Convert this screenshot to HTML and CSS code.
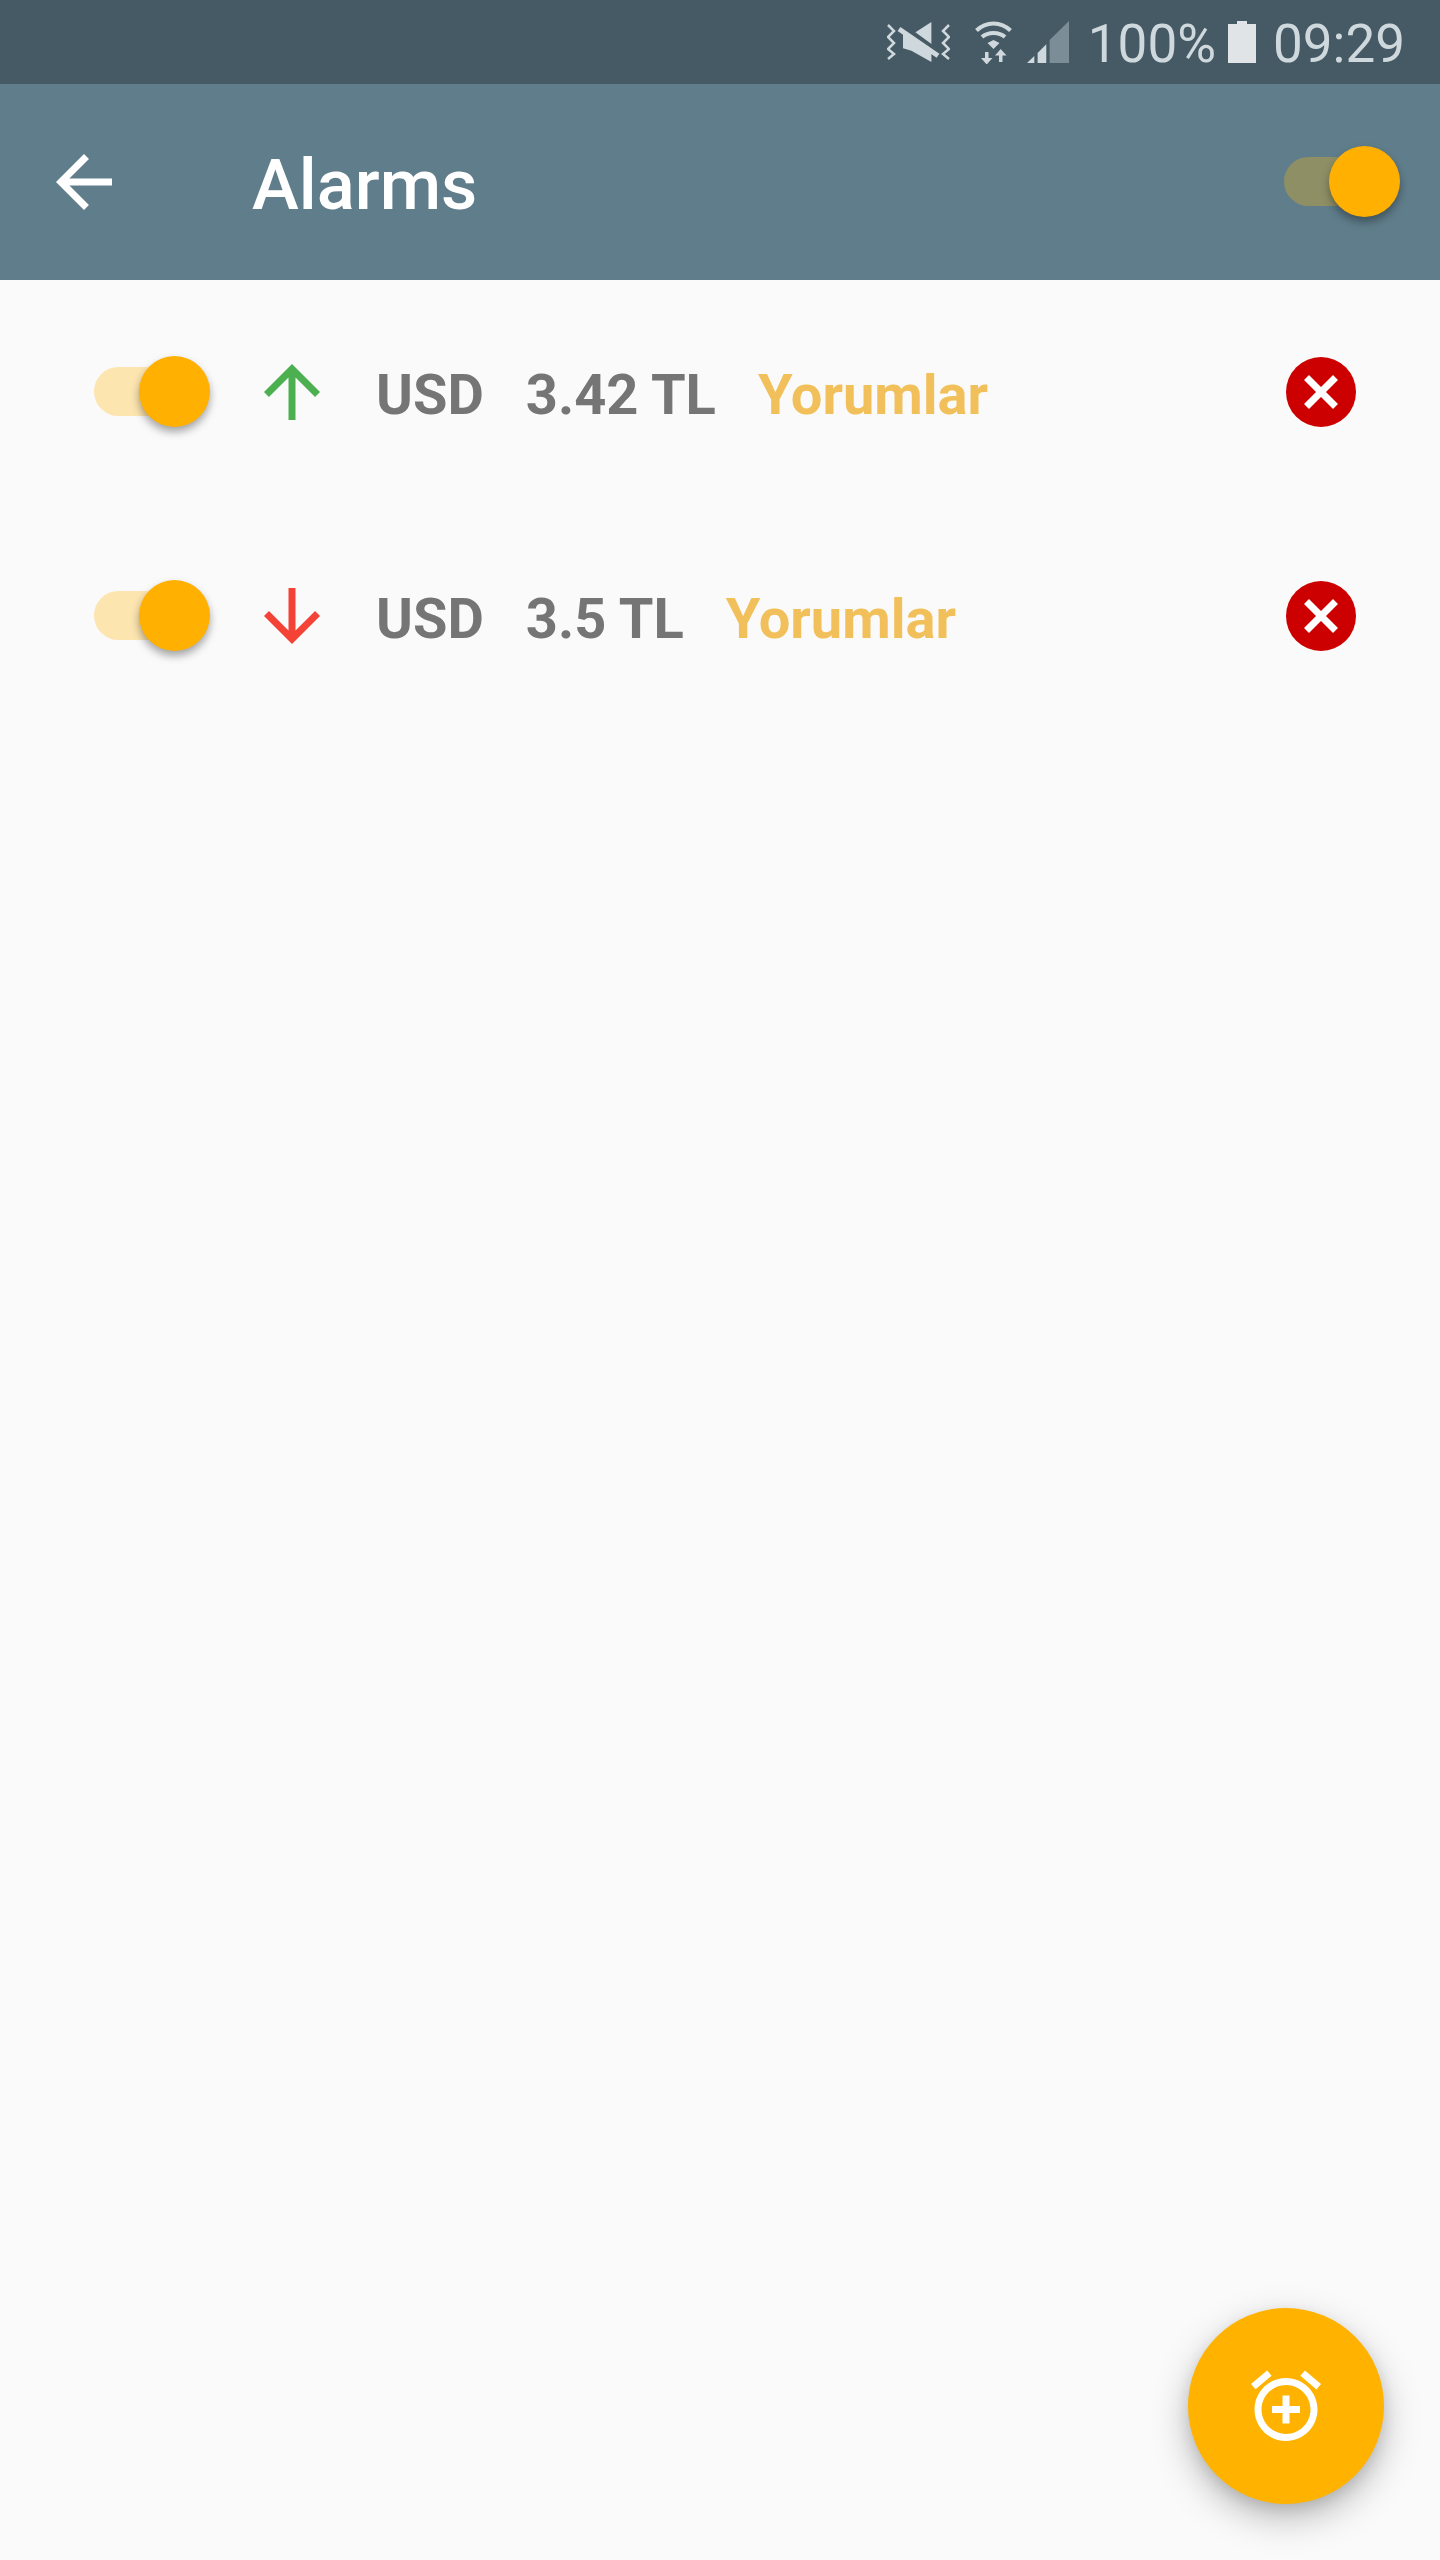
FILE: index.html
```html
<!DOCTYPE html>
<html lang="en">
<head>
    <meta charset="UTF-8">
    <meta name="viewport" content="width=device-width, initial-scale=1.0">
    <title>Alarms</title>
    <link rel="stylesheet" href="styles.css">
</head>
<body>
    <div class="screen">
        <div class="status-bar">
            <svg class="icon-mute" viewBox="0 0 63 40">
                <polygon points="28.4,10.3 44.4,0 44.4,22"/>
                <polygon points="16,11 16,26.3 24.4,28.7 44.4,40 44.4,30"/>
                <path d="M12 7L51 33.7" class="line" stroke-width="5"/>
                <path d="M1 3l6 6-6 6 6 6-6 6 6 5-6 5M62 3l-6 6 6 6-6 6 6 6-6 5 6 5" class="line" stroke-width="2.5"/>
            </svg>
            <svg class="icon-wifi" viewBox="0 0 37 43">
                <path d="M1.5 9.5C11 0 26 0 35.5 9.5M7 16C13 10.5 24 10.5 30 16" class="line" stroke-width="4"/>
                <polygon points="12.5,22 18.5,19 24.500,22 18.500,28"/>
                <polygon points="10,31 13.500,31 13.500,37 17.500,37 11.700,43.500 6,37 10,37"/>
                <polygon points="24,41 27.500,41 27.500,34.500 31.500,34.500 25.700,28 20,34.500 24,34.500"/>
            </svg>
            <svg class="icon-signal" viewBox="0 0 42 42">
                <polygon points="0,42 7.300,35 7.300,42"/>
                <polygon points="10.600,42 10.600,32 19.300,23.300 19.300,42"/>
                <polygon points="22.600,42 22.600,19 42,0 42,42" class="dim"/>
            </svg>
            <span class="status-text">100%</span>
            <svg class="icon-battery" viewBox="0 0 28 42">
                <path d="M9 0h10v3h9v39H0V3h9z"/>
            </svg>
            <span class="status-text">09:29</span>
        </div>

        <div class="app-bar">
            <svg class="icon-84 icon-back" viewBox="0 0 24 24">
                <path d="M20 11H7.830l5.590-5.590L12 4l-8 8 8 8 1.410-1.410L7.830 13H20v-2z"/>
            </svg>
            <h1>Alarms</h1>
            <div class="switch switch-dark">
                <span class="track"></span>
                <span class="thumb"></span>
            </div>
        </div>

        <div class="alarm-list">
            <div class="alarm-row">
                <div class="switch">
                    <span class="track"></span>
                    <span class="thumb"></span>
                </div>
                <svg class="icon-84 arrow-up" viewBox="0 0 24 24">
                    <path d="M4 12l1.410 1.410L11 7.830V20h2V7.830l5.580 5.590L20 12l-8-8-8 8z"/>
                </svg>
                <span class="alarm-text">USD</span>
                <span class="alarm-text">3.42 TL</span>
                <span class="alarm-text comments">Yorumlar</span>
                <svg class="delete" viewBox="0 0 70 70">
                    <circle cx="35" cy="35" r="35"/>
                    <path d="M20.500 20.500L49.500 49.500M49.500 20.500L20.500 49.500"/>
                </svg>
            </div>
            <div class="alarm-row">
                <div class="switch">
                    <span class="track"></span>
                    <span class="thumb"></span>
                </div>
                <svg class="icon-84 arrow-down" viewBox="0 0 24 24">
                    <path d="M20 12l-1.410-1.410L13 16.170V4h-2v12.170l-5.580-5.590L4 12l8 8 8-8z"/>
                </svg>
                <span class="alarm-text">USD</span>
                <span class="alarm-text">3.5 TL</span>
                <span class="alarm-text comments">Yorumlar</span>
                <svg class="delete" viewBox="0 0 70 70">
                    <circle cx="35" cy="35" r="35"/>
                    <path d="M20.500 20.500L49.500 49.500M49.500 20.500L20.500 49.500"/>
                </svg>
            </div>
        </div>

        <div class="fab">
            <svg class="icon-84" viewBox="0 0 24 24">
                <path d="M7.880 3.390L6.600 1.860 2 5.710l1.290 1.530 4.590-3.850zM22 5.720l-4.600-3.860-1.290 1.530 4.600 3.860L22 5.720zM12 4c-4.970 0-9 4.030-9 9s4.020 9 9 9c4.970 0 9-4.030 9-9s-4.030-9-9-9zm0 16c-3.870 0-7-3.130-7-7s3.130-7 7-7 7 3.130 7 7-3.130 7-7 7zm1-11h-2v3H8v2h3v3h2v-3h3v-2h-3V9z"/>
            </svg>
        </div>
    </div>
</body>
</html>
```

FILE: styles.css
```css
body {
    margin: 0;
    font-family: Roboto, "Liberation Sans", sans-serif;
    background-color: #fafafa;
}

.screen {
    position: relative;
    width: 1440px;
    height: 2560px;
    overflow: hidden;
    background-color: #fafafa;
}

.status-bar {
    display: flex;
    align-items: center;
    justify-content: flex-end;
    height: 84px;
    padding-right: 35px;
    background-color: #455a64;
    color: #cfd8dc;
}

.status-bar svg {
    flex: none;
    fill: #cfd8dc;
}

.status-bar .line {
    fill: none;
    stroke: #cfd8dc;
}

.status-bar .dim {
    fill: #7b8d96;
}

.icon-mute {
    width: 63px;
    height: 40px;
    margin-right: 25px;
}

.icon-wifi {
    width: 37px;
    height: 43px;
    margin-right: 15px;
}

.icon-signal {
    width: 42px;
    height: 42px;
    margin-right: 19px;
}

.status-text {
    padding-top: 5px;
    font-size: 53px;
    line-height: 79px;
}

.status-bar .icon-battery {
    width: 28px;
    height: 42px;
    margin: 0 17px 0 12px;
    fill: #e0e4e6;
}

.app-bar {
    display: flex;
    align-items: center;
    height: 196px;
    padding: 0 43px;
    background-color: #607d8b;
}

.app-bar h1 {
    margin: 0 0 0 126px;
    padding-top: 6px;
    font-size: 70.5px;
    font-weight: 500;
    color: #fff;
}

.icon-84 {
    flex: none;
    width: 84px;
    height: 84px;
}

.icon-back {
    margin-left: -1px;
    fill: #fff;
}

.switch {
    position: relative;
    flex: none;
    width: 116px;
    height: 71px;
    margin-top: -1px;
}

.switch-dark {
    margin-left: auto;
    margin-right: -3px;
}

.track {
    position: absolute;
    left: 0;
    top: 11px;
    width: 100px;
    height: 49px;
    border-radius: 25px;
    background-color: #fde5b0;
}

.switch-dark .track {
    background-color: #8f8f66;
}

.thumb {
    position: absolute;
    right: 0;
    top: 0;
    width: 71px;
    height: 71px;
    border-radius: 50%;
    background-color: #ffb000;
    box-shadow: 0 5px 8px rgba(0, 0, 0, 0.35);
}

.alarm-row {
    display: flex;
    align-items: center;
    height: 224px;
    padding: 0 84px 0 94px;
}

.arrow-up {
    margin-left: 40px;
    fill: #4caf50;
}

.arrow-down {
    margin-left: 40px;
    fill: #f44336;
}

.alarm-text {
    margin-left: 42px;
    padding-top: 6px;
    font-size: 56px;
    font-weight: 700;
    color: #757575;
}

.comments {
    color: #f2c05a;
}

.delete {
    flex: none;
    width: 70px;
    height: 70px;
    margin-left: auto;
}

.delete circle {
    fill: #cc0000;
}

.delete path {
    fill: none;
    stroke: #fff;
    stroke-width: 7;
}

.fab {
    position: absolute;
    left: 1188px;
    top: 2308px;
    display: flex;
    align-items: center;
    justify-content: center;
    width: 196px;
    height: 196px;
    border-radius: 50%;
    background-color: #ffb300;
    box-shadow: 0 14px 36px rgba(0, 0, 0, 0.26), 0 6px 14px rgba(0, 0, 0, 0.1);
    fill: #fff;
}
```
